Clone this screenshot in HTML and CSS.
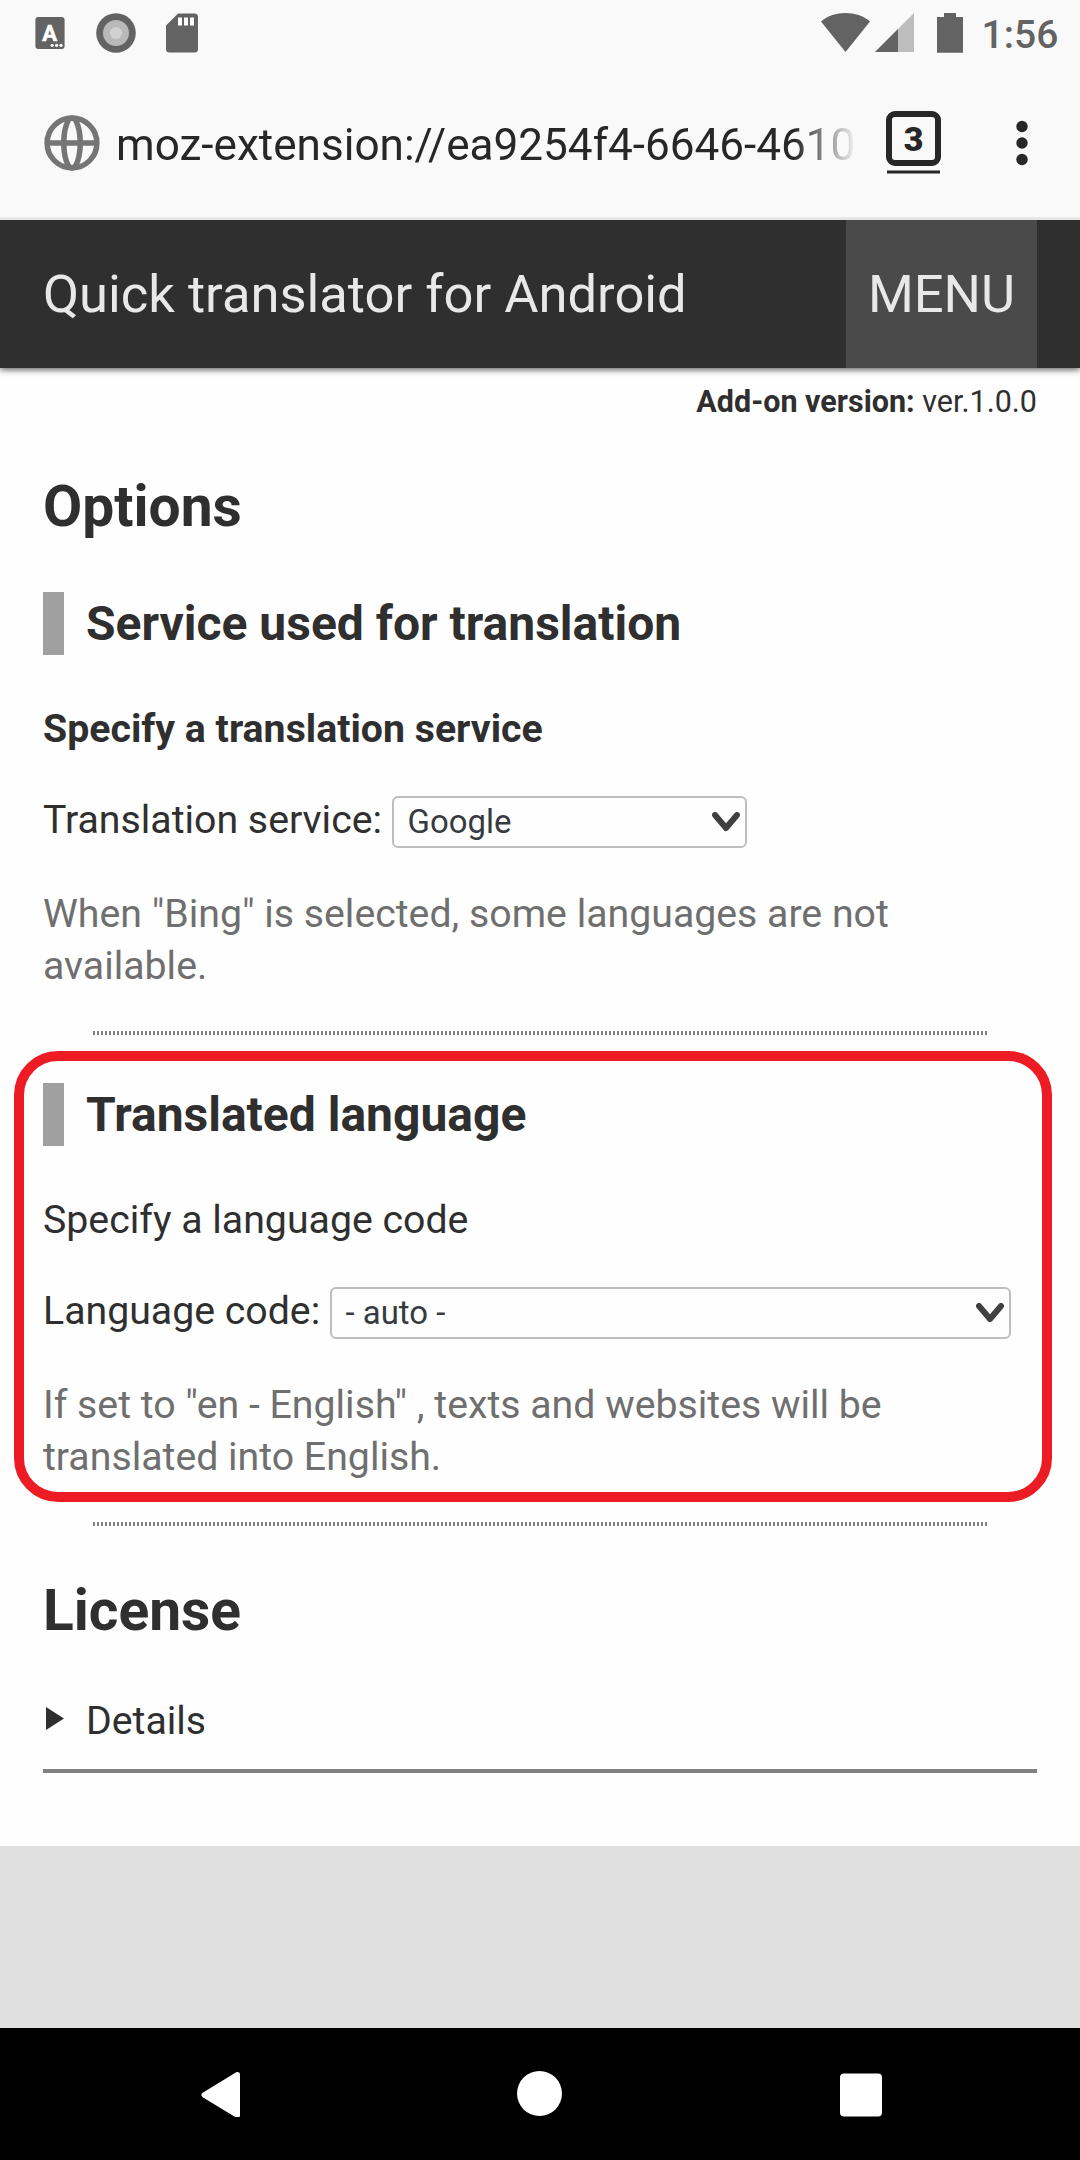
FILE: index.html
```html
<!DOCTYPE html>
<html lang="en">
<head>
<meta charset="utf-8">
<title>Quick translator for Android</title>
<link rel="stylesheet" href="styles.css">
</head>
<body>
<div class="status-bar">
  <div class="status-left">
    <svg width="30" height="40" viewBox="0 0 30 40"><rect x=".4" y="4" width="29.2" height="32" rx="3" fill="#636363"/><text class="keyboard-letter" x="14.600" y="27.5">A</text><g fill="#fff"><circle cx="17.2" cy="32.3" r="1.6"/><circle cx="21.6" cy="32.3" r="1.6"/><circle cx="26" cy="32.3" r="1.6"/></g></svg>
    <svg width="40" height="40" viewBox="0 0 40 40"><circle cx="20" cy="20" r="19.8" fill="#636363"/><circle cx="20" cy="20" r="13" fill="#b9b9b9"/><circle cx="20" cy="20" r="6" fill="#d2d2d2"/></svg>
    <svg width="32" height="40" viewBox="0 0 32 40"><path d="M12 .4H28.500a3.500 3.500 0 0 1 3.500 3.500V36a3.500 3.500 0 0 1-3.500 3.500H3.500A3.500 3.500 0 0 1 0 36V12.500Z" fill="#636363"/><path d="M12 4.500h4v8h-4zM18 4.500h4v8h-4zM24 4.500h4v8h-4z" fill="#fff"/></svg>
  </div>
  <div class="status-right">
    <svg width="49" height="40" viewBox="0 0 49 40"><path d="M0 8.500C13-2.700 36-2.700 49 8.500L24.500 39Z" fill="#636363"/></svg>
    <svg class="signal" width="39" height="40" viewBox="0 0 39 40"><path d="M0 39 39 0V39Z" fill="#bdbdbd"/><path d="M0 39 23 16V39Z" fill="#636363"/></svg>
    <svg class="battery" width="26" height="40" viewBox="0 0 26 40"><path d="M0 4H7V0H19V4H26V39.700H0Z" fill="#636363"/></svg>
    <span class="clock">1:56</span>
  </div>
</div>
<div class="toolbar">
  <svg class="globe" width="56" height="56" viewBox="0 0 56 56" fill="none" stroke="#757575" stroke-width="5.500"><circle cx="28" cy="28" r="24.900"/><ellipse cx="28" cy="28" rx="8.200" ry="24.900"/><path d="M3 28H53"/></svg>
  <div class="url">moz-extension://ea9254f4-6646-4610</div>
  <svg class="tabs" width="56" height="64" viewBox="0 0 56 64"><rect x="3" y="3" width="49" height="49" rx="6" fill="none" stroke="#272727" stroke-width="6"/><path d="M1 61H54" stroke="#272727" stroke-width="3.200"/><text class="tab-count" x="27.500" y="40">3</text></svg>
  <svg class="more" width="12" height="46" viewBox="0 0 12 46" fill="#272727"><circle cx="6" cy="6.500" r="5.700"/><circle cx="6" cy="23" r="5.700"/><circle cx="6" cy="39.500" r="5.700"/></svg>
</div>
<header class="header">
  <div class="title">Quick translator for Android</div>
  <div class="menu">MENU</div>
</header>
<main class="content">
  <div class="version"><b>Add-on version:</b> ver.1.0.0</div>
  <h1>Options</h1>
  <section class="section service">
    <h2>Service used for translation</h2>
    <p><b>Specify a translation service</b></p>
    <div class="field">
      <span>Translation service:</span>
      <div class="select"><span>Google</span><svg width="28" height="20" viewBox="0 0 28 20"><path d="M3 3 14 16 25 3"/></svg></div>
    </div>
    <p class="hint">When "Bing" is selected, some languages are not available.</p>
    <div class="dots"></div>
  </section>
  <section class="section language">
    <h2>Translated language</h2>
    <p>Specify a language code</p>
    <div class="field">
      <span>Language code:</span>
      <div class="select"><span>- auto -</span><svg width="28" height="20" viewBox="0 0 28 20"><path d="M3 3 14 16 25 3"/></svg></div>
    </div>
    <p class="hint">If set to "en - English" , texts and websites will be translated into English.</p>
    <div class="dots"></div>
    <div class="highlight"></div>
  </section>
  <h1 class="license">License</h1>
  <div class="details"><svg width="18" height="23" viewBox="0 0 18 23"><path d="M0 0 18 11.500 0 23Z" fill="#2f2f2f"/></svg>Details</div>
</main>
<nav class="nav-bar">
  <svg width="40" height="46" viewBox="0 0 40 46"><path d="M36.500 3.500 3 24 36.500 44.500Z" fill="#fff" stroke="#fff" stroke-width="5" stroke-linejoin="round"/></svg>
  <svg width="46" height="46" viewBox="0 0 46 46"><circle cx="22.500" cy="22.500" r="22.500" fill="#fff"/></svg>
  <svg width="42" height="46" viewBox="0 0 42 46"><rect y="2.500" width="42" height="43" rx="4" fill="#fff"/></svg>
</nav>
</body>
</html>
```
FILE: styles.css
```css
* { box-sizing: border-box; }
body {
  margin: 0;
  width: 1080px;
  height: 2160px;
  display: flex;
  flex-direction: column;
  background: #e0e0e0;
  font: 39.250px/52px Roboto, sans-serif;
  color: #2f2f2f;
}
svg { display: block; flex: none; }
h1, h2, p { margin: 0; }

.status-bar {
  display: flex;
  justify-content: space-between;
  height: 66px;
  padding: 13px 0 0 35px;
  background: #f9f9f9;
}
.status-left { display: flex; gap: 30.5px; }
.status-right { display: flex; width: 259px; }
.signal { margin-left: 5px; }
.battery { margin-left: 23px; }
.clock {
  margin-left: 18.6px;
  font-size: 39px;
  font-weight: 500;
  line-height: 44px;
  color: #636363;
}
.keyboard-letter {
  font: 700 22px Roboto, sans-serif;
  text-anchor: middle;
  fill: #fff;
  stroke: #fff;
  stroke-width: .6px;
}

.toolbar {
  position: relative;
  z-index: 1;
  display: flex;
  height: 154px;
  padding: 45px 0 0 44px;
  background: #f9f9f9;
  border-bottom: 3px solid #e6e6e6;
}
.globe { margin-top: 4px; }
.url {
  width: 744px;
  margin: 4px 0 0 16px;
  overflow: hidden;
  white-space: nowrap;
  font-size: 44.1px;
  line-height: 60px;
  color: #272727;
  -webkit-mask-image: linear-gradient(to right, #000 678px, transparent 742px);
  mask-image: linear-gradient(to right, #000 678px, transparent 742px);
}
.tabs { margin-left: 26px; }
.tab-count {
  font: 900 34px Roboto, sans-serif;
  text-anchor: middle;
  fill: #272727;
}
.more { margin: 9px 0 0 74px; }

.header {
  position: relative;
  display: flex;
  justify-content: space-between;
  height: 148px;
  padding: 0 43px 0 43px;
  background: #2f2f2f;
  box-shadow: 0 2px 6px rgba(0, 0, 0, .6);
  font-size: 52.500px;
  line-height: 148px;
  color: #e8e8e8;
}
.menu { width: 191px; background: #4a4a4a; text-align: center; }

.content {
  height: 1478px;
  padding: 14px 43px 0;
  background: #fefefe;
}
.version { font-size: 30.500px; line-height: 40px; text-align: right; }
h1 { margin-top: 52px; font-size: 56.900px; line-height: 66px; }
.license { margin-top: 52px; }
h2 {
  border-left: 21px solid #a0a0a0;
  padding-left: 22px;
  font-size: 48px;
  line-height: 63px;
}
.section { position: relative; }
.service { margin-top: 52px; }
.language { margin-top: 48px; }
.section p { margin-top: 48px; }
.field {
  display: flex;
  justify-content: space-between;
  margin-top: 39px;
}
.service .field { width: 704px; }
.language .field { width: 968px; }
.select {
  display: flex;
  justify-content: space-between;
  height: 52px;
  margin-top: 2px;
  padding: 0 5px 0 13.500px;
  border: 2px solid #bebebe;
  border-radius: 6px;
  font-size: 32.900px;
  line-height: 48px;
  color: #363b40;
}
.service .select { width: 355px; }
.language .select { width: 681px; }
.select svg { margin-top: 14px; }
.select path {
  fill: none;
  stroke: #404040;
  stroke-width: 6px;
  stroke-linecap: round;
  stroke-linejoin: round;
}
.section .hint { margin-top: 40px; color: #6f6f6f; }
.dots {
  height: 4px;
  margin: 39px 50px 0;
  background: repeating-linear-gradient(to right, #808080 0 2px, transparent 2px 4px);
}
.highlight {
  position: absolute;
  left: -29px;
  top: -32px;
  width: 1038px;
  height: 451px;
  border: 10px solid #ed1c24;
  border-radius: 44px;
}
.details {
  display: flex;
  align-items: flex-start;
  gap: 22px;
  margin-top: 51px;
  padding: 0 0 22px 3px;
  border-bottom: 4px solid #808080;
}
.details svg { margin-top: 12px; }

.nav-bar {
  display: flex;
  justify-content: space-between;
  height: 132px;
  margin-top: auto;
  padding: 43px 198.500px 0 201px;
  background: #000;
}
```
